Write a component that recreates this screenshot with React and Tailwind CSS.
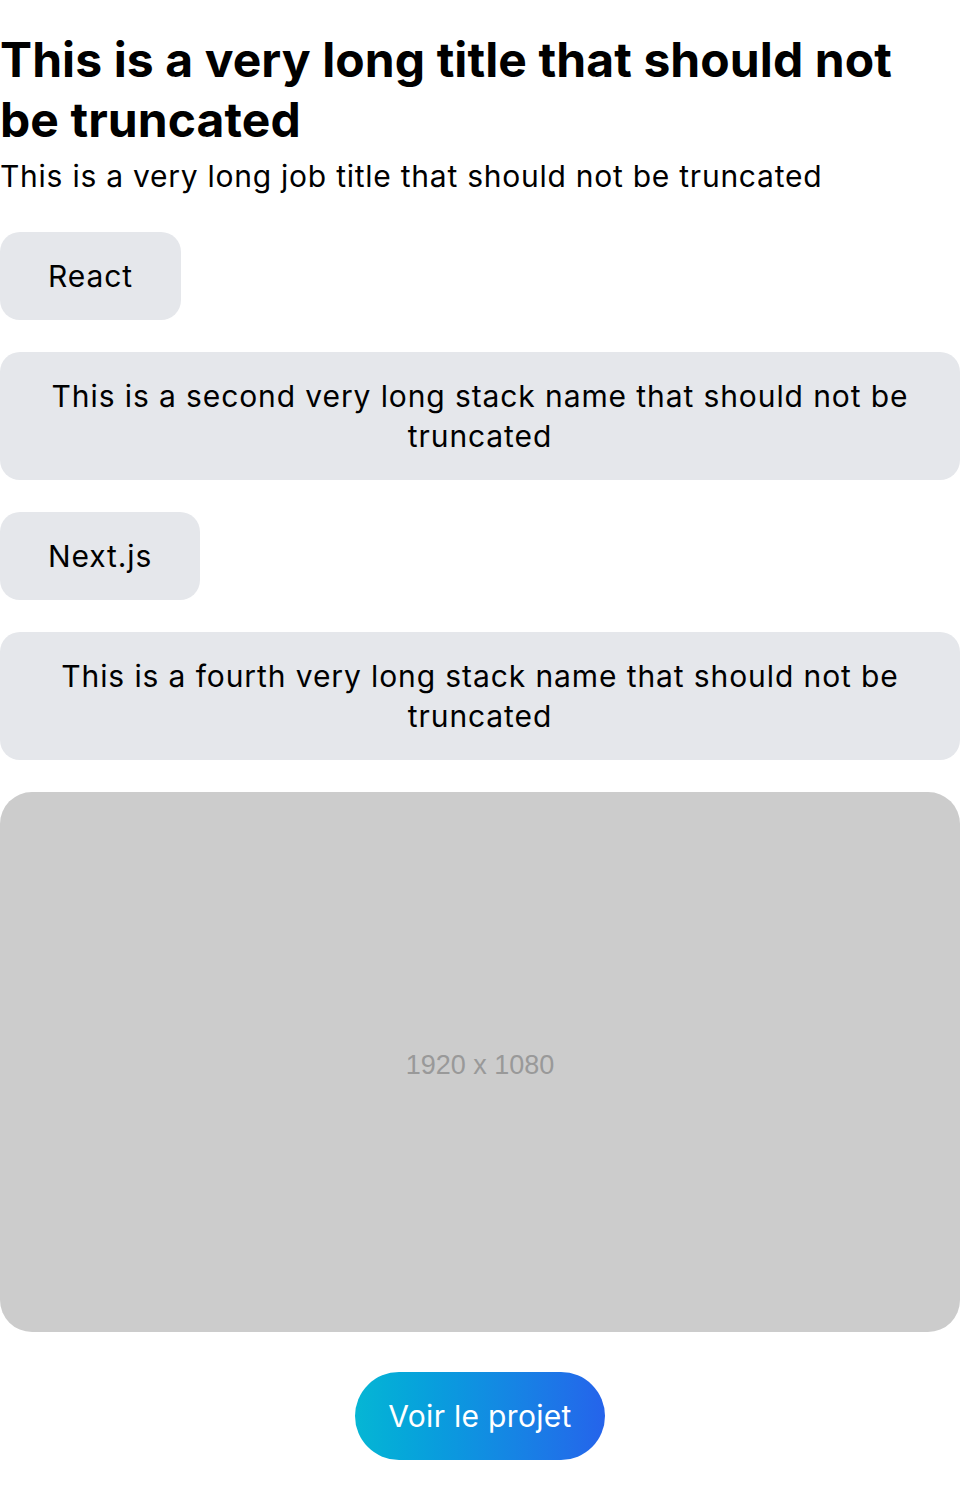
export default function App() {
  const stacks = [
    "React",
    "This is a second very long stack name that should not be truncated",
    "Next.js",
    "This is a fourth very long stack name that should not be truncated",
  ];
  return (
    <div className="bg-white text-black pt-[30px] pb-8" style={{ fontFamily: "Inter, 'Noto Sans', sans-serif" }}>
      <h1 className="text-5xl font-bold leading-[60px] tracking-[0.002em] pr-4">
        This is a very long title that should not be truncated
      </h1>
      <p className="text-3xl leading-9 tracking-wide mt-2">
        This is a very long job title that should not be truncated
      </p>
      <div className="flex flex-col items-start gap-8 mt-[38px]">
        {stacks.map((s) => (
          <div key={s} className="bg-[#e5e7eb] rounded-[20px] px-12 py-6 text-3xl leading-10 tracking-[0.03em] text-center">
            {s}
          </div>
        ))}
      </div>
      <div className="mt-8 w-full aspect-video bg-[#cccccc] rounded-[32px] flex items-center justify-center pt-[6px]">
        <span className="text-[#999999] text-[27px]" style={{ fontFamily: "'Liberation Sans', Arial, sans-serif" }}>
          1920 x 1080
        </span>
      </div>
      <div className="flex justify-center mt-10">
        <button className="rounded-full px-[33px] py-6 text-3xl leading-10 tracking-[0.01em] text-white bg-gradient-to-r from-[#06b6d4] to-[#2563eb]">
          Voir le projet
        </button>
      </div>
    </div>
  );
}
